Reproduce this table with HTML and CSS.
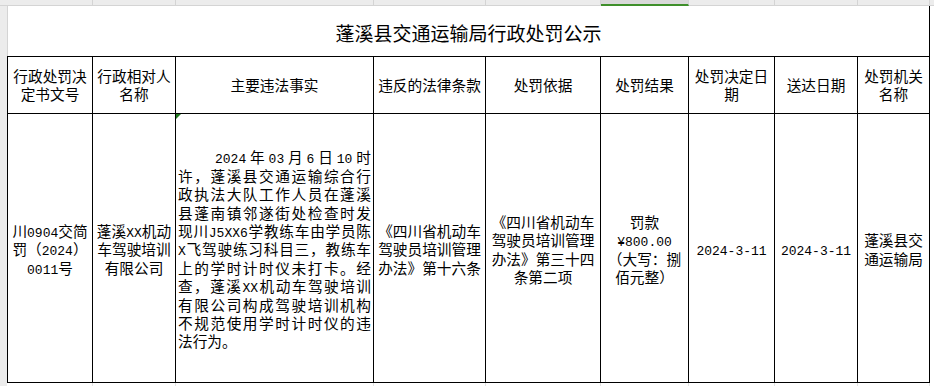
FILE: index.html
```html
<!DOCTYPE html>
<html lang="zh-CN">
<head>
<meta charset="utf-8">
<title>蓬溪县交通运输局行政处罚公示</title>
<link rel="stylesheet" href="styles.css">
</head>
<body>
<div class="colhdrs">
  <div class="corner"></div>
  <div class="ch c1"></div>
  <div class="ch c2"></div>
  <div class="ch c3"></div>
  <div class="ch c4"></div>
  <div class="ch c5"></div>
  <div class="ch c6 sel"></div>
  <div class="ch c7"></div>
  <div class="ch c8"></div>
  <div class="ch c9"></div>
  <div class="rest"></div>
</div>
<div class="main">
  <div class="rowhdr"></div>
  <div class="sheet">
    <div class="title">蓬溪县交通运输局行政处罚公示</div>
    <div class="grid">
      <div class="cell"><p class="tx">行政处罚决<br>定书文号</p></div>
      <div class="cell"><p class="tx">行政相对人<br>名称</p></div>
      <div class="cell"><p class="tx">主要违法事实</p></div>
      <div class="cell"><p class="tx">违反的法律条款</p></div>
      <div class="cell"><p class="tx">处罚依据</p></div>
      <div class="cell"><p class="tx">处罚结果</p></div>
      <div class="cell"><p class="tx">处罚决定日<br>期</p></div>
      <div class="cell"><p class="tx">送达日期</p></div>
      <div class="cell"><p class="tx">处罚机关<br>名称</p></div>

      <div class="cell bd"><p class="tx">川<span class="en">0904</span>交简<br>罚（<span class="en">2024</span>）<br><span class="en">0011</span>号</p></div>
      <div class="cell bd"><p class="tx">蓬溪<span class="en">XX</span>机动<br>车驾驶培训<br>有限公司</p></div>
      <div class="cell bd fact-cell">
        <div class="fact">
          <div class="l1"><span class="en">2024</span><span>年</span><span class="en">03</span><span>月</span><span class="en">6</span><span>日</span><span class="en">10</span><span>时</span></div>
          <div class="j">许，蓬溪县交通运输综合行</div>
          <div class="j">政执法大队工作人员在蓬溪</div>
          <div class="j">县蓬南镇邻遂街处检查时发</div>
          <div class="j">现川<span class="en">J5XX6</span>学教练车由学员陈</div>
          <div class="j"><span class="en">X</span>飞驾驶练习科目三，教练车</div>
          <div class="j">上的学时计时仪未打卡。经</div>
          <div class="j">查，蓬溪<span class="en">XX</span>机动车驾驶培训</div>
          <div class="j">有限公司构成驾驶培训机构</div>
          <div class="j">不规范使用学时计时仪的违</div>
          <div>法行为。</div>
        </div>
      </div>
      <div class="cell bd"><p class="tx">《四川省机动车<br>驾驶员培训管理<br>办法》第十六条</p></div>
      <div class="cell bd"><p class="tx">《四川省机动车<br>驾驶员培训管理<br>办法》第三十四<br>条第二项</p></div>
      <div class="cell bd"><p class="tx">罚款<br><span class="en">¥800.00</span><br>（大写：捌<br>佰元整）</p></div>
      <div class="cell bd"><p class="tx"><span class="en">2024-3-11</span></p></div>
      <div class="cell bd"><p class="tx"><span class="en">2024-3-11</span></p></div>
      <div class="cell bd"><p class="tx">蓬溪县交<br>通运输局</p></div>
    </div>
    <div class="below">
      <div class="bl c1"></div>
      <div class="bl c2"></div>
      <div class="bl c3"></div>
      <div class="bl c4"></div>
      <div class="bl c5"></div>
      <div class="bl c6"></div>
      <div class="bl c7"></div>
      <div class="bl c8"></div>
      <div class="bl c9"></div>
    </div>
  </div>
</div>
</body>
</html>
```
FILE: styles.css
```css
html, body {
  margin: 0;
  padding: 0;
  background: #fff;
}
body {
  width: 934px;
  height: 386px;
  overflow: hidden;
  font-family: "Noto Sans CJK SC", "Noto Sans", sans-serif;
  color: #000;
}

/* column header strip */
.colhdrs {
  display: flex;
  height: 6px;
  background: #ececec;
}
.colhdrs > div {
  box-sizing: border-box;
  height: 6px;
  border-bottom: 1px solid #d4d4d4;
  flex: none;
}
.colhdrs .ch {
  border-right: 1px solid #d4d4d4;
}
.corner { width: 7px; }
.ch.c1 { width: 86px; }
.ch.c2 { width: 83px; }
.ch.c3 { width: 198px; }
.ch.c4 { width: 112px; }
.ch.c5 { width: 115px; }
.ch.c6 { width: 88px; }
.ch.c7 { width: 86px; }
.ch.c8 { width: 83px; }
.ch.c9 { width: 72px; }
.colhdrs .rest { flex: 1; }
.colhdrs .sel {
  background: #d9d9d9;
  border-bottom: 2px solid #3f8f2b;
}

.main {
  display: flex;
  height: 380px;
}
.rowhdr {
  width: 7px;
  flex: none;
  background: #ececec;
}

.sheet {
  display: flex;
  flex-direction: column;
}

.title {
  box-sizing: border-box;
  width: 923px;
  height: 51px;
  border-left: 1px solid #d4d4d4;
  border-right: 1px solid #000;
  display: flex;
  align-items: center;
  justify-content: center;
  padding-top: 2px;
  font-size: 19px;
  line-height: 1;
}

.grid {
  display: grid;
  grid-template-columns: 84px 82px 197px 111px 114px 87px 85px 82px 71px;
  grid-template-rows: 56px 268px;
  gap: 1px;
  padding: 1px;
  background: #000;
  width: max-content;
}
.cell {
  box-sizing: border-box;
  background: #fff;
  display: flex;
  align-items: center;
  justify-content: center;
  text-align: center;
  font-size: 14.67px;
  line-height: 18.4px;
  position: relative;
}
.tx {
  margin: 0;
  white-space: nowrap;
}
.cell.bd {
  padding-top: 3px;
}
.en {
  font-family: "Liberation Mono", monospace;
  font-size: 13px;
  line-height: 1;
}

.fact-cell {
  padding-left: 2px;
  padding-right: 2px;
}
.fact-cell::before {
  content: "";
  position: absolute;
  top: 0;
  left: 0;
  border-top: 5px solid #1f7a1f;
  border-right: 5px solid transparent;
}
.fact {
  width: 193px;
  text-align: left;
}
.fact .l1 {
  display: flex;
  justify-content: space-between;
  align-items: baseline;
  padding-left: 37px;
}
.fact .j {
  height: 18.4px;
  text-align: justify;
  text-align-last: justify;
}

.below {
  display: flex;
  height: 3px;
}
.below .bl {
  box-sizing: border-box;
  flex: none;
  border-right: 1px solid #e2e2e2;
}
.bl.c1 { width: 86px; }
.bl.c2 { width: 83px; }
.bl.c3 { width: 198px; }
.bl.c4 { width: 112px; }
.bl.c5 { width: 115px; }
.bl.c6 { width: 88px; }
.bl.c7 { width: 86px; }
.bl.c8 { width: 83px; }
.bl.c9 { width: 72px; }
```
